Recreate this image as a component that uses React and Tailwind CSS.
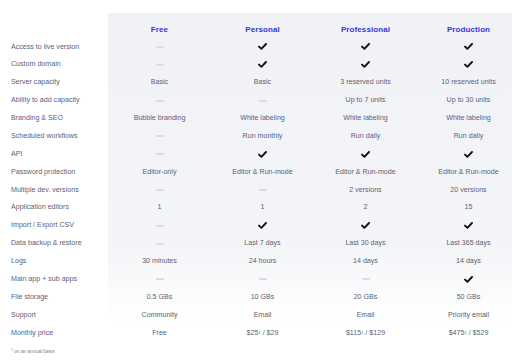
import React from 'react';

const Check = () => (
    <svg width="9" height="7" viewBox="0 0 9 7" className="inline-block">
        <path d="M1 3.6 L3.4 5.8 L8 1" fill="none" stroke="#111" strokeWidth="1.9" strokeLinecap="round" strokeLinejoin="round" />
    </svg>
);

const Dash = () => <span className="inline-block w-[8px] h-[2px] bg-[#d9dbe1] rounded-sm" />;

const Price = ({ a, b }) => (
    <span>
        {a}
        <sup className="text-[4px] relative -top-[1px]">1</sup> / {b}
    </span>
);

const C = 'check';
const D = 'dash';

// label, linkish?, [free, personal, professional, production]
const rows = [
    ['Access to live version', false, [D, C, C, C]],
    ['Custom domain', true, [D, C, C, C]],
    ['Server capacity', false, ['Basic', 'Basic', '3 reserved units', '10 reserved units']],
    ['Ability to add capacity', true, [D, D, 'Up to 7 units', 'Up to 30 units']],
    ['Branding & SEO', true, ['Bubble branding', 'White labeling', 'White labeling', 'White labeling']],
    ['Scheduled workflows', true, [D, 'Run monthly', 'Run daily', 'Run daily']],
    ['API', false, [D, C, C, C]],
    ['Password protection', false, ['Editor-only', 'Editor & Run-mode', 'Editor & Run-mode', 'Editor & Run-mode']],
    ['Multiple dev. versions', false, [D, D, '2 versions', '20 versions']],
    ['Application editors', false, ['1', '1', '2', '15']],
    ['Import / Export CSV', false, [D, C, C, C]],
    ['Data backup & restore', false, [D, 'Last 7 days', 'Last 30 days', 'Last 365 days']],
    ['Logs', false, ['30 minutes', '24 hours', '14 days', '14 days']],
    ['Main app + sub apps', true, [D, D, D, C]],
    ['File storage', false, ['0.5 GBs', '10 GBs', '20 GBs', '50 GBs']],
    ['Support', false, ['Community', 'Email', 'Email', 'Priority email']],
    ['Monthly price', true, ['Free', <Price a="$25" b="$29" />, <Price a="$115" b="$129" />, <Price a="$475" b="$529" />]],
];

const plans = ['Free', 'Personal', 'Professional', 'Production'];

const Cell = ({ v }) => {
    if (v === C) return <Check />;
    if (v === D) return <Dash />;
    return <span>{v}</span>;
};

export default function App() {
    return (
        <div className="w-[512px] h-[362px] bg-white overflow-hidden relative font-['Liberation_Sans',Arial,sans-serif] text-[7.1px] text-[#5d6273]">
            <div className="pt-[13px] flex">
                {/* Labels */}
                <div className="w-[108px] shrink-0">
                    <div className="h-[25px]" />
                    {rows.map(([label, link]) => (
                        <div key={label} className={`h-[17.875px] flex items-center pl-[11px] whitespace-nowrap ${link ? 'text-[#58608a]' : ''}`}>
                            {label}
                        </div>
                    ))}
                </div>

                {/* Plans panel */}
                <div className="w-[412px] shrink-0 bg-gradient-to-b from-[#f1f2f6] via-[#f4f5f8] via-70% to-white to-[92%] flex">
                    {plans.map((p, i) => (
                        <div key={p} className="w-[103px] shrink-0">
                            <div className="h-[25px] flex items-center justify-center pt-[8px] text-[8px] font-bold text-[#3a34e0] tracking-[0.1px]">
                                {p}
                            </div>
                            {rows.map(([label, link, vals]) => (
                                <div key={label} className={`h-[17.875px] flex items-center justify-center whitespace-nowrap ${typeof vals[i] === 'string' && link && vals[i] !== C && vals[i] !== D ? 'text-[#58608a]' : ''}`}>
                                    <Cell v={vals[i]} />
                                </div>
                            ))}
                            <div className="h-[6px]" />
                        </div>
                    ))}
                </div>
            </div>

            <div className="pl-[11px] pt-[2px] leading-none text-[4.8px] text-[#7a7f8c]">
                <sup className="text-[3.5px]">1</sup> on an annual basis
            </div>
        </div>
    );
}
